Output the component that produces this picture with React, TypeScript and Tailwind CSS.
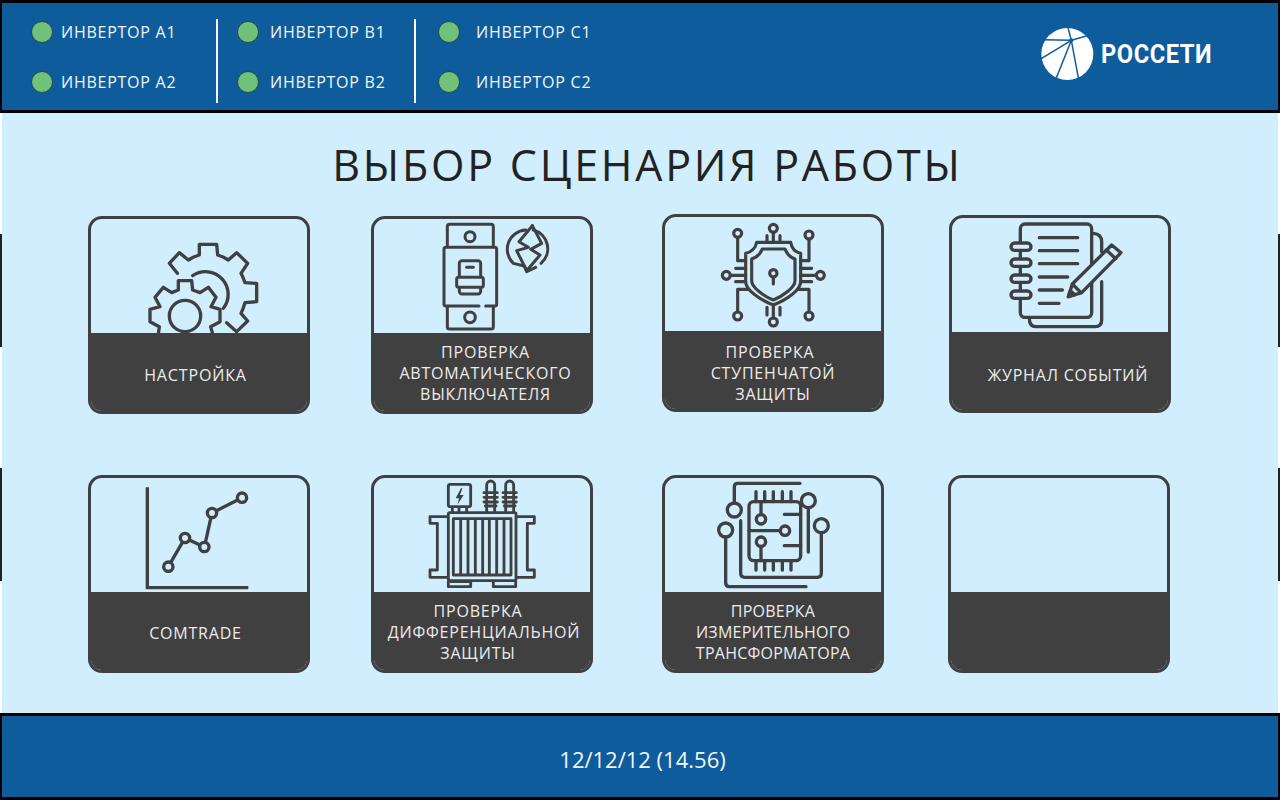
const inverters = [
  { pad: "pl-[29px]", gap: "gap-2", width: "w-[216px]", names: ["ИНВЕРТОР A1", "ИНВЕРТОР A2"] },
  { pad: "pl-[19px]", gap: "gap-[11px]", width: "w-[198px]", names: ["ИНВЕРТОР B1", "ИНВЕРТОР B2"] },
  { pad: "pl-[22px]", gap: "gap-4", width: "w-[240px]", names: ["ИНВЕРТОР C1", "ИНВЕРТОР C2"] },
];

function GearIcon() {
  return (
    <svg viewBox="33 27 648 342" className="block h-full w-full" fill="none" stroke="#404040" strokeWidth="10" strokeLinecap="round" strokeLinejoin="round">
      <path d="M292 190 L268 160 L298 128 L325 150 Q340 140 358 135 L358 103 H410 L413 135 Q430 140 445 150 L470 128 L503 160 L483 190 Q490 203 495 218 L530 220 V275 L495 278 Q490 295 483 310 L503 333 L470 365 L440 338" />
      <path d="M338 197 A68 68 0 0 1 430 295" />
      <circle cx="315" cy="318" r="47" />
      <path d="M235 372 L238 350 L210 335 V298 L240 290 L225 262 L250 232 L275 248 L295 240 V212 H335 L338 240 L360 248 L385 232 L408 262 L393 290 L420 298 V335 L392 350 L398 372" />
    </svg>
  );
}

function BreakerIcon() {
  return (
    <svg viewBox="27 27 648 342" className="block h-full w-full" fill="none" stroke="#404040" strokeWidth="9" strokeLinecap="round" strokeLinejoin="round">
      <path d="M247 110 V50 Q247 43 254 43 H378 Q385 43 385 50 V110" />
      <circle cx="315" cy="80" r="15" />
      <path d="M342 288 H243 Q237 288 237 282 V118 Q237 112 243 112 H389 Q395 112 395 118 V282 Q395 288 389 288 H362" />
      <path d="M247 290 V350 Q247 357 254 357 H378 Q385 357 385 350 V290" />
      <circle cx="315" cy="322" r="16" />
      <rect x="283" y="152" width="64" height="100" rx="8" />
      <rect x="275" y="202" width="80" height="30" rx="6" fill="#d0eefd" />
      <path d="M305 172 H325" />
      <path d="M505 60 A58 58 0 0 1 528 160" />
      <path d="M482 60 A58 58 0 0 0 445 160 L478 168 L485 185 L512 172" />
      <path d="M502 47 L462 95 L490 112 L455 122 L485 182" />
      <path d="M502 47 L530 100 L497 118 L525 135 L485 182" />
    </svg>
  );
}

function ShieldIcon() {
  return (
    <svg viewBox="30 21 648 342" className="block h-full w-full" fill="none" stroke="#404040" strokeWidth="9.5" strokeLinecap="round" strokeLinejoin="round">
      <path d="M305 97 H407 C410 115 422 127 437 130 V215 C437 240 395 270 355 285 C315 270 272 240 272 215 V130 C288 127 302 115 305 97Z" />
      <path d="M322 117 H390 C395 130 405 142 420 147 V212 C420 232 385 258 355 270 C325 258 290 232 290 212 V147 C305 142 317 130 322 117Z" />
      <circle cx="355" cy="190" r="11" />
      <path d="M355 201 V222" />
      <circle cx="355" cy="55" r="12" />
      <path d="M355 67 V97 M336 77 V97 M375 77 V97" />
      <circle cx="248" cy="70" r="12" />
      <path d="M248 82 V152 H272" />
      <circle cx="462" cy="75" r="12" />
      <path d="M462 87 V152 H437" />
      <circle cx="214" cy="196" r="12" />
      <path d="M242 175 H272 M226 196 H272 M242 215 H272" />
      <circle cx="496" cy="196" r="12" />
      <path d="M437 175 H470 M437 196 H484 M437 215 H470" />
      <circle cx="248" cy="318" r="12" />
      <path d="M248 306 V238 H280" />
      <circle cx="462" cy="318" r="12" />
      <path d="M462 306 V238 H430" />
      <circle cx="355" cy="336" r="12" />
      <path d="M355 324 V285 M336 292 V315 M375 292 V315" />
    </svg>
  );
}

function JournalIcon() {
  return (
    <svg viewBox="21 24 648 342" className="block h-full w-full" fill="none" stroke="#404040" strokeWidth="10" strokeLinecap="round" strokeLinejoin="round">
      <rect x="226" y="42" width="214" height="280" rx="14" />
      <path d="M445 70 Q470 72 470 95 V125 M470 215 V330 Q470 350 450 350 H272 Q253 350 253 325" />
      <path d="M283 83 H398 M283 122 H398 M283 161 H398 M283 201 H368 M283 240 H352 M283 280 H342" />
      <rect x="198" y="99" width="60" height="22" rx="11" fill="#d0eefd" />
      <rect x="198" y="147" width="60" height="22" rx="11" fill="#d0eefd" />
      <rect x="198" y="195" width="60" height="22" rx="11" fill="#d0eefd" />
      <rect x="198" y="243" width="60" height="22" rx="11" fill="#d0eefd" />
      <path d="M370 260 L382 222 L500 105 L528 128 L410 248 Z" fill="#d0eefd" />
      <path d="M484 120 L512 146" />
      <path d="M382 222 L408 248" />
      <path d="M370 260 L376 242 L390 254 Z" fill="#404040" />
    </svg>
  );
}

function ChartIcon() {
  const points = [[265, 290], [315, 204], [373, 231], [396, 129], [486, 83]];
  return (
    <svg viewBox="33 24 648 342" className="block h-full w-full" fill="none" stroke="#404040" strokeWidth="10">
      <path d="M202 52 V353 H505" />
      <polyline points="265,290 315,204 373,231 396,129 486,83" />
      {points.map(([x, y]) => (
        <circle key={x} cx={x} cy={y} r="14" fill="#d0eefd" />
      ))}
    </svg>
  );
}

function TransformerIcon() {
  const fins = [287, 309, 331, 353, 373, 395, 417];
  return (
    <svg viewBox="27 24 648 342" className="block h-full w-full" fill="none" stroke="#404040" strokeWidth="8.5" strokeLinejoin="round">
      <rect x="250" y="128" width="203" height="204" rx="4" />
      <rect x="265" y="146" width="173" height="169" />
      {fins.map((x) => (
        <path key={x} d={`M${x} 146 V315`} />
      ))}
      <path d="M250 140 H195 V160 H217 V300 H195 V322 H250" />
      <path d="M453 140 H508 V160 H487 V300 H508 V322 H453" />
      <path d="M250 332 V350 H317 V335 H255 M385 335 V350 H452 V332" />
      <rect x="250" y="43" width="67" height="67" rx="6" />
      <path d="M288 55 L272 85 H282 L278 103 L296 75 H285 L292 55 Z" fill="#404040" stroke="none" />
      <path d="M262 110 V128 M282 110 V128 M305 110 V128" />
      {[377, 434].map((x) => (
        <g key={x}>
          <path d={`M${x - 12} 60 V45 a12 12 0 0 1 24 0 V60`} />
          <path d={`M${x - 20} 68 H${x + 20} M${x - 20} 82 H${x + 20} M${x - 20} 96 H${x + 20} M${x - 16} 108 H${x + 16}`} strokeLinecap="round" />
          <path d={`M${x - 12} 60 V128 M${x + 12} 60 V128`} />
        </g>
      ))}
    </svg>
  );
}

function CircuitIcon() {
  const pins = [303, 329, 355, 382, 408];
  return (
    <svg viewBox="30 24 648 342" className="block h-full w-full" fill="none" stroke="#404040" strokeWidth="10" strokeLinecap="round" strokeLinejoin="round">
      <rect x="282" y="95" width="155" height="177" rx="14" />
      {pins.map((x) => (
        <path key={x} d={`M${x} 65 V95 M${x} 272 V300`} />
      ))}
      <circle cx="318" cy="148" r="14" />
      <path d="M318 95 V134" />
      <circle cx="390" cy="182" r="14" />
      <path d="M282 182 H376" />
      <circle cx="318" cy="215" r="14" />
      <path d="M318 229 V272" />
      <path d="M388 133 H437 M388 227 H437" />
      <path d="M238 99 V50 Q238 40 248 40 H435" />
      <circle cx="238" cy="120" r="21" />
      <circle cx="460" cy="92" r="21" />
      <path d="M460 113 V246" />
      <circle cx="499" cy="167" r="21" />
      <path d="M499 188 V310 Q499 322 487 322 H270 Q257 322 257 310 V152" />
      <circle cx="212" cy="180" r="21" />
      <path d="M212 201 V338 Q212 350 224 350 H453" />
    </svg>
  );
}

function LogoMark() {
  return (
    <svg viewBox="120 82 165 162" className="h-[54px] w-[55px] shrink-0">
      <circle cx="202" cy="163" r="78" fill="#ffffff" />
      <g stroke="#0e5c9c" strokeWidth="4.5" fill="none">
        <path d="M214 122 L203 80" />
        <path d="M214 122 L262 108" />
        <path d="M214 122 L128 120" />
        <path d="M214 122 L118 180" />
        <path d="M214 122 L165 245" />
        <path d="M214 122 L236 240" />
      </g>
      <circle cx="214" cy="122" r="6" fill="#0e5c9c" />
    </svg>
  );
}

type CardData = {
  lines: string[];
  icon: React.ReactNode;
  wrap: string;
  text: string;
  shifts?: string[];
};

const rows: CardData[][] = [
  [
    { lines: ["НАСТРОЙКА"], icon: <GearIcon />, wrap: "ml-0 mt-[2px]", text: "pr-[7px] pt-[6px] tracking-[0.85px]" },
    { lines: ["ПРОВЕРКА", "АВТОМАТИЧЕСКОГО", "ВЫКЛЮЧАТЕЛЯ"], icon: <BreakerIcon />, wrap: "ml-[61px] mt-[2px]", text: "pl-[7px] pt-[2px] tracking-[0.8px]" },
    { lines: ["ПРОВЕРКА", "СТУПЕНЧАТОЙ", "ЗАЩИТЫ"], icon: <ShieldIcon />, wrap: "ml-[69px] mt-0", text: "pt-[6px] tracking-[0.8px]", shifts: ["mr-[6px]", "", ""] },
    { lines: ["ЖУРНАЛ СОБЫТИЙ"], icon: <JournalIcon />, wrap: "ml-[65px] mt-px", text: "pl-4 pt-2 tracking-[0.8px]" },
  ],
  [
    { lines: ["COMTRADE"], icon: <ChartIcon />, wrap: "ml-0 mt-0", text: "pr-[7px] pt-1 tracking-[0.8px]" },
    { lines: ["ПРОВЕРКА", "ДИФФЕРЕНЦИАЛЬНОЙ", "ЗАЩИТЫ"], icon: <TransformerIcon />, wrap: "ml-[61px] mt-0", text: "pl-[4px] pt-[2px] tracking-[0.8px]", shifts: ["mr-3", "", "mr-3"] },
    { lines: ["ПРОВЕРКА", "ИЗМЕРИТЕЛЬНОГО", "ТРАНСФОРМАТОРА"], icon: <CircuitIcon />, wrap: "ml-[69px] mt-0", text: "pt-[2px] tracking-[0.25px]" },
    { lines: [], icon: null, wrap: "ml-[64px] mt-0", text: "" },
  ],
];

function Card({ lines, icon, wrap, text, shifts }: CardData) {
  return (
    <div className={`flex h-[198px] w-[222px] shrink-0 flex-col overflow-hidden rounded-[14px] border-[3px] border-[#404040] ${wrap}`}>
      <div className="h-[114px] shrink-0">{icon}</div>
      <div className={`flex flex-1 flex-col items-center justify-center bg-[#404040] text-[16px] leading-[21px] text-[#ececec] ${text}`}>
        {lines.map((line, i) => (
          <span key={line} className={shifts ? shifts[i] : ""}>{line}</span>
        ))}
      </div>
    </div>
  );
}

export default function App() {
  return (
    <div className="flex h-[800px] w-[1280px] flex-col overflow-hidden bg-[#d0eefd] font-['Open_Sans',sans-serif]">
      <header className="flex h-[113px] shrink-0 items-center border-x-2 border-y-[3px] border-black bg-[#0e5c9c]">
        {inverters.map((group, i) => (
          <div key={i} className={`mt-2 flex h-[84px] items-start pt-[2px] ${group.width} ${group.pad} ${i < 2 ? "border-r-2 border-white" : ""}`}>
            <div className="flex flex-col gap-[28px]">
              {group.names.map((name) => (
                <div key={name} className={`flex h-[22px] items-center ${group.gap}`}>
                  <span className="h-[22px] w-[22px] shrink-0 rounded-full border border-[#1d4d4a] bg-[#70c27a]" />
                  <span className="text-[16px] tracking-[0.75px] text-[#f2f6fa]">{name}</span>
                </div>
              ))}
            </div>
          </div>
        ))}
        <div className="mb-[5px] ml-[384px] flex items-center gap-[6px]">
          <LogoMark />
          <span className="origin-left scale-x-[0.91] font-['Roboto',sans-serif] text-[26px] font-bold tracking-[0.6px] text-white">РОССЕТИ</span>
        </div>
      </header>

      <main className="relative flex-1 border-x-2 border-white bg-[#d0eefd]">
        <h1 className="mt-[22px] pl-[15px] text-center text-[43px] leading-[60px] tracking-[2.76px] text-[#222222]">
          ВЫБОР СЦЕНАРИЯ РАБОТЫ
        </h1>
        <div className="mt-[19px] flex flex-col gap-[61px] pl-[86px]">
          {rows.map((row, i) => (
            <div key={i} className="flex h-[200px] items-start">
              {row.map((card, j) => (
                <Card key={j} {...card} />
              ))}
            </div>
          ))}
        </div>
        <span className="absolute -left-[2px] top-[121px] h-[113px] w-[2px] bg-[#222222]" />
        <span className="absolute -left-[2px] top-[355px] h-[113px] w-[2px] bg-[#222222]" />
        <span className="absolute -right-[2px] top-[121px] h-[113px] w-[2px] bg-[#222222]" />
        <span className="absolute -right-[2px] top-[355px] h-[113px] w-[2px] bg-[#222222]" />
      </main>

      <footer className="flex h-[87px] shrink-0 items-center justify-center border-x-2 border-y-[3px] border-black bg-[#0e5c9c] pl-[5px] pt-[6px] text-[22px] text-[#f2f6fa]">
        12/12/12 (14.56)
      </footer>
    </div>
  );
}
